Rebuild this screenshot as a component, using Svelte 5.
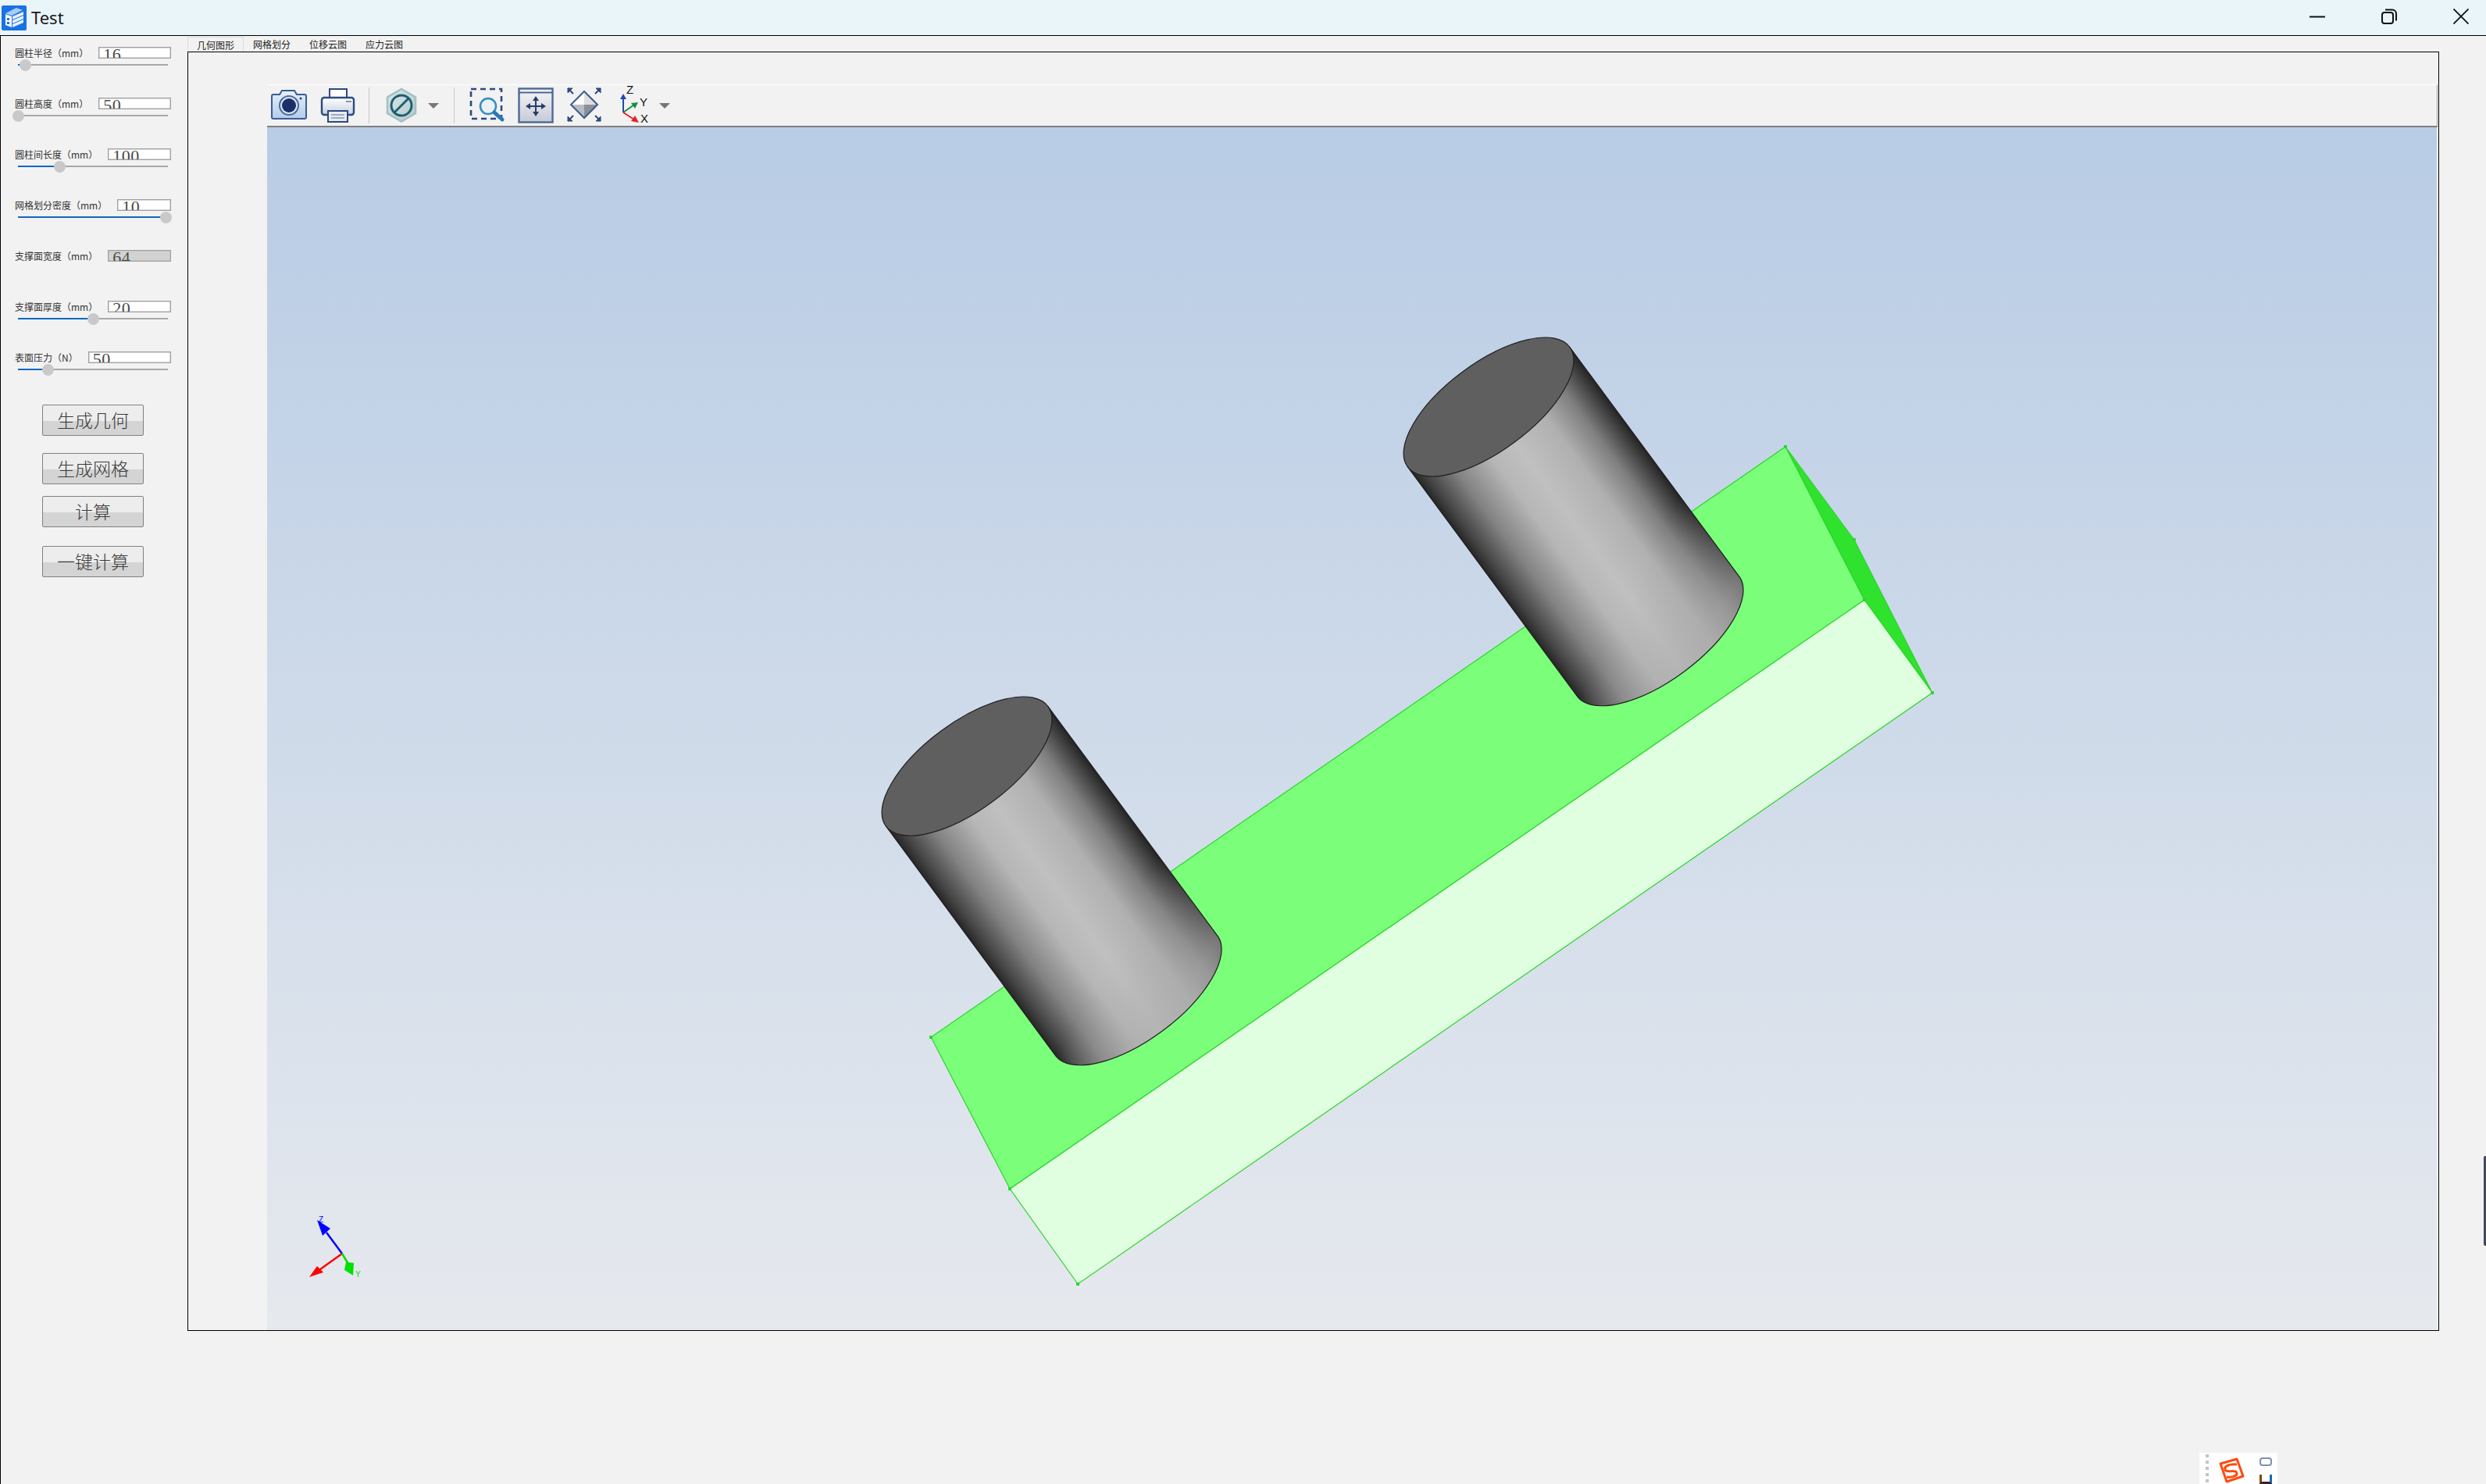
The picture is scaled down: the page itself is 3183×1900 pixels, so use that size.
<script>
  const rows = [
    { label: '圆柱半径（mm）', value: '16', pos: 5.2 },
    { label: '圆柱高度（mm）', value: '50', pos: 0.5 },
    { label: '圆柱间长度（mm）', value: '100', pos: 28 },
    { label: '网格划分密度（mm）', value: '10', pos: 98.5 },
    { label: '支撑面宽度（mm）', value: '64', disabled: true },
    { label: '支撑面厚度（mm）', value: '20', pos: 50.5 },
    { label: '表面压力（N）', value: '50', pos: 20 }
  ];
  const buttons = [
    { text: '生成几何', gap: 3 },
    { text: '生成网格', gap: 22 },
    { text: '计算', gap: 15 },
    { text: '一键计算', gap: 24 }
  ];
  const tabs = ['几何图形', '网格划分', '位移云图', '应力云图'];

  // cylinder geometry, in window pixels
  const a = 129, b = 56, rot = -36.5;
  const u = [0.804, -0.594];
  const d = [218, 295];
  const px = a * u[0], py = a * u[1];
  const cylinders = [{ x: 1238, y: 981, id: 'c1' }, { x: 1906, y: 521, id: 'c2' }].map((c) => {
    const l = [c.x - px, c.y - py], r = [c.x + px, c.y + py];
    const br = [r[0] + d[0], r[1] + d[1]];
    return {
      ...c,
      path: `M${l} L${l[0] + d[0]},${l[1] + d[1]} A${a} ${b} ${rot} 0 0 ${br} L${r} Z`,
      x1: c.x + d[0] / 2 - px, y1: c.y + d[1] / 2 - py,
      x2: c.x + d[0] / 2 + px, y2: c.y + d[1] / 2 + py,
      // the shading fans out toward the lower right corner
      lx1: br[0] - 102, ly1: br[1] - 52, lx2: br[0], ly2: br[1]
    };
  });
  const corners = [[2286, 572], [2374, 691], [2387, 768], [2474, 887], [1192, 1328], [1293, 1522], [1380, 1644]];
</script>

<div class="window">
  <header class="title">
    <svg class="logo" viewBox="0 0 32 32" width="32" height="32">
      <rect width="32" height="32" rx="2" fill="#1a72e4" />
      <path d="M5 10 L19 3 L27 6 L13 13Z" fill="#a9cdf6" />
      <path d="M5 11 L13 14 V28 L5 25Z" fill="#fff" />
      <path d="M14 14 L28 8 V12 L14 18Z M14 19 L28 13 V17 L14 23Z M14 24 L28 18 V22 L14 28Z" fill="#e6f0fc" />
      <rect x="7" y="16" width="3" height="3" fill="#1a72e4" />
      <rect x="7" y="21" width="3" height="3" fill="#1a72e4" />
    </svg>
    <span class="app-name">Test</span>
    <div class="controls">
      <svg width="20" height="20" viewBox="0 0 20 20"><path d="M0 10.5H20" stroke="#111" stroke-width="2" /></svg>
      <svg width="20" height="20" viewBox="0 0 20 20" fill="none" stroke="#111" stroke-width="2"><rect x="1" y="5" width="14" height="14" rx="3" /><path d="M5 1.5h9a5 5 0 0 1 5 5v9" /></svg>
      <svg width="20" height="20" viewBox="0 0 20 20"><path d="M0.5 0.5L19.5 19.5M19.5 0.5L0.5 19.5" stroke="#111" stroke-width="1.8" /></svg>
    </div>
  </header>

  <div class="body">
    <aside class="sidebar">
      {#each rows as row}
        <div class="row">
          <div class="line">
            <span class="label">{row.label}</span>
            <div class="field" class:disabled={row.disabled}>{row.value}</div>
          </div>
          {#if row.pos !== undefined}
            <div class="slider">
              <div class="fill" style="width:{row.pos}%"></div>
              <div class="handle" style="left:{row.pos}%"></div>
            </div>
          {/if}
        </div>
      {/each}
      {#each buttons as btn}
        <button class="btn" style="margin-top:{btn.gap}px">{btn.text}</button>
      {/each}
    </aside>

    <main class="main">
      <div class="tabs">
        {#each tabs as tab, i}
          <div class="tab" class:active={i === 0}>{tab}</div>
        {/each}
      </div>
      <div class="frame">
        <div class="toolbar">
          <div class="group">
            <svg class="icon" viewBox="0 0 46 46">
              <defs>
                <linearGradient id="cam" x1="0" y1="0" x2="0" y2="1"><stop offset="0" stop-color="#e6f0fb" /><stop offset="1" stop-color="#b4cbe8" /></linearGradient>
                <linearGradient id="prn" x1="0" y1="0" x2="0" y2="1"><stop offset="0" stop-color="#fff" /><stop offset="1" stop-color="#c4d0e2" /></linearGradient>
                <linearGradient id="hex" x1="0" y1="0" x2="1" y2="1"><stop offset="0" stop-color="#dbe6e8" /><stop offset="1" stop-color="#b4cace" /></linearGradient>
                <linearGradient id="fit" x1="0" y1="0" x2="0" y2="1"><stop offset="0" stop-color="#f6f6f8" /><stop offset="1" stop-color="#c6cad6" /></linearGradient>
              </defs>
              <path d="M3 9h8l3-5h16l3 5h10a2 2 0 0 1 2 2v27a2 2 0 0 1-2 2H3a2 2 0 0 1-2-2V11a2 2 0 0 1 2-2z" fill="url(#cam)" stroke="#3c5c90" stroke-width="2" />
              <circle cx="23" cy="23" r="12" fill="#dce8f6" stroke="#4a6a9c" stroke-width="2" />
              <circle cx="23" cy="23" r="9" fill="#1c2f68" />
              <circle cx="38" cy="14" r="1.5" fill="#2a4478" />
            </svg>
            <svg class="icon" viewBox="0 0 46 46">
              <rect x="12" y="2" width="22" height="14" fill="#fff" stroke="#2e4a7e" stroke-width="2" />
              <rect x="2" y="13" width="41" height="22" rx="3" fill="url(#prn)" stroke="#2e4a7e" stroke-width="2.4" />
              <rect x="33" y="17" width="7" height="2" fill="#8a94a8" />
              <rect x="10" y="30" width="25" height="14" fill="#e8ecf2" stroke="#2e4a7e" stroke-width="2" />
              <path d="M14 35H31M14 39H31" stroke="#8496b4" stroke-width="1.6" />
            </svg>
          </div>
          <div class="sep"></div>
          <div class="group g2">
            <svg class="icon" viewBox="0 0 46 46">
              <path d="M23 2L41 12.5V33L23 43.5L5 33V12.5Z" fill="url(#hex)" stroke="#a4c0c4" stroke-width="2.6" />
              <circle cx="23" cy="23" r="13" fill="none" stroke="#1e6070" stroke-width="3" />
              <path d="M14 32L32 14" stroke="#1e6070" stroke-width="3" />
            </svg>
            <span class="dd hex-dd"></span>
          </div>
          <div class="sep"></div>
          <div class="group">
            <svg class="icon" viewBox="0 0 46 46">
              <rect x="3" y="2" width="39" height="38" fill="none" stroke="#2e4a7e" stroke-width="2.6" stroke-dasharray="7 5" />
              <circle cx="25" cy="24" r="10" fill="#eaf2f8" stroke="#3a8cc0" stroke-width="2.6" />
              <path d="M33 32L43 41" stroke="#2a78b8" stroke-width="5" stroke-linecap="round" />
            </svg>
            <svg class="icon" viewBox="0 0 46 46">
              <rect x="1.5" y="1.5" width="43" height="43" fill="url(#fit)" stroke="#4e6894" stroke-width="2.4" />
              <path d="M2 6.5H44" stroke="#4e6894" stroke-width="2" />
              <path d="M23 13V35M12 24H34" stroke="#263e6c" stroke-width="2" />
              <path d="M23 11L19 17H27ZM23 37L19 31H27ZM10 24L16 20V28ZM36 24L30 20V28Z" fill="#263e6c" />
            </svg>
            <svg class="icon" viewBox="0 0 46 46">
              <path d="M22 5L5 22H22Z" fill="#fff" /><path d="M22 5L39 22H22Z" fill="#dedede" />
              <path d="M5 22L22 39V22Z" fill="#b8bcc4" /><path d="M39 22L22 39V22Z" fill="#8c9098" />
              <path d="M22 5L39 22L22 39L5 22Z" fill="none" stroke="#3c5c90" stroke-width="2" />
              <path d="M1 1L8 8M43 1L36 8M1 43L8 36M43 43L36 36" stroke="#2e4a7e" stroke-width="2" />
              <path d="M1 1H7L1 7ZM43 1H37L43 7ZM1 43H7L1 37ZM43 43H37L43 37Z" fill="#2e4a7e" stroke="#2e4a7e" />
            </svg>
            <svg class="icon axes" viewBox="0 0 46 46">
              <path d="M9 32V13" stroke="#1e4ab0" stroke-width="2" /><path d="M9 8L5 15H13Z" fill="#1e4ab0" />
              <path d="M9 32L23 22" stroke="#169040" stroke-width="2" /><path d="M28 19L19 20L24 27Z" fill="#169040" />
              <path d="M9 32L23 41" stroke="#e82020" stroke-width="2" /><path d="M29 45L19 43L24 36Z" fill="#e82020" />
              <text x="13" y="8" class="ax">Z</text>
              <text x="30" y="24" class="ax">Y</text>
              <text x="31" y="45" class="ax">X</text>
            </svg>
            <span class="dd ax-dd"></span>
          </div>
        </div>

        <svg class="scene" viewBox="342 163 2778 1540" width="2778" height="1540">
          <defs>
            <linearGradient id="bg" x1="0" y1="0" x2="0" y2="1"><stop offset="0" stop-color="#b8cce5" /><stop offset="1" stop-color="#e6e9ee" /></linearGradient>
            {#each cylinders as c}
              <linearGradient id={c.id} gradientUnits="userSpaceOnUse" x1={c.x1} y1={c.y1} x2={c.x2} y2={c.y2}>
                <stop offset="0" stop-color="#262626" />
                <stop offset="0.05" stop-color="#444" />
                <stop offset="0.18" stop-color="#828282" />
                <stop offset="0.36" stop-color="#b6b6b6" />
                <stop offset="0.5" stop-color="#c0c0c0" />
                <stop offset="0.7" stop-color="#b0b0b0" />
                <stop offset="0.85" stop-color="#7e7e7e" />
                <stop offset="0.96" stop-color="#3c3c3c" />
                <stop offset="1" stop-color="#242424" />
              </linearGradient>
              <linearGradient id="{c.id}-fan" gradientUnits="userSpaceOnUse" x1={c.lx1} y1={c.ly1} x2={c.lx2} y2={c.ly2}>
                <stop offset="0" stop-color="#aaa" stop-opacity="0" />
                <stop offset="1" stop-color="#aaa" stop-opacity="0.6" />
              </linearGradient>
            {/each}
          </defs>
          <rect x="342" y="163" width="2778" height="1540" fill="url(#bg)" />

          <polygon points="2286,572 2374,691 2474,887 2387,768" fill="#2ee22e" stroke="#2fd42f" stroke-width="1.2" />
          <polygon points="1293,1522 2387,768 2474,887 1380,1644" fill="#e0ffe0" stroke="#2fd42f" stroke-width="1.2" />
          <polygon points="1192,1328 2286,572 2387,768 1293,1522" fill="#7bff7b" stroke="#2fd42f" stroke-width="1.2" />
          {#each corners as p}
            <rect x={p[0] - 2} y={p[1] - 2} width="4" height="4" fill="#2fd42f" />
          {/each}

          {#each cylinders as c}
            <path d={c.path} fill="url(#{c.id})" />
            <path d={c.path} fill="url(#{c.id}-fan)" stroke="#1e1e1e" stroke-width="1.2" />
            <ellipse cx={c.x} cy={c.y} rx={a} ry={b} transform="rotate({rot} {c.x} {c.y})" fill="#5f5f5f" stroke="#1e1e1e" stroke-width="1.2" />
          {/each}

          <path d="M438 1605L418 1578" stroke="#0000ff" stroke-width="2.5" />
          <polygon points="406,1562 423,1573 413,1582" fill="#0000ff" />
          <path d="M438 1605L406 1628" stroke="#ff0000" stroke-width="2.5" />
          <polygon points="396,1635 406,1621 414,1629" fill="#ff0000" />
          <path d="M438 1605L447 1620" stroke="#00e000" stroke-width="2.5" />
          <polygon points="441,1626 443,1616 453,1617 452,1633" fill="#00e000" />
          <text x="408" y="1565" class="tri-z">Z</text>
          <text x="455" y="1635" class="tri-y">Y</text>
        </svg>
      </div>
    </main>
  </div>

  <div class="ime">
    <div class="ime-dots"><i></i><i></i><i></i><i></i><i></i></div>
    <svg width="34" height="34" viewBox="0 0 34 34">
      <path d="M3 9L24 3L32 25L11 32Z" fill="#fff" stroke="#ff4a10" stroke-width="3" stroke-linejoin="round" />
      <path d="M24 10C15 9 7 12 9 17C11 21 23 16 24 21C25 25 16 27 11 26" fill="none" stroke="#ff4a10" stroke-width="3" />
    </svg>
    <div class="ime-marks">
      <span class="ring"></span>
      <span class="cup"></span>
    </div>
  </div>
  <div class="edge-bar"></div>
</div>

<style>
  :global(body) { margin: 0; background: #f2f2f2; }

  .window {
    position: relative;
    width: 3183px;
    height: 1900px;
    overflow: hidden;
    background: #f2f2f2;
    font-family: "Noto Sans CJK SC", "Noto Sans", sans-serif;
    color: #222;
  }

  .title {
    display: flex;
    align-items: center;
    height: 45px;
    padding-left: 2px;
    background: #e9f5f9;
    border-bottom: 1px solid #000;
    box-sizing: content-box;
  }
  .app-name {
    margin: 0 0 2px 6px;
    font-family: "Noto Sans", sans-serif;
    font-size: 22px;
    color: #1a1a1a;
  }
  .controls {
    margin: 0 22px 3px auto;
    display: flex;
    gap: 72px;
  }

  .body { display: flex; height: 1854px; }

  .sidebar {
    width: 240px;
    box-sizing: border-box;
    border-left: 1px solid #000;
    padding: 14px 21px 0 18px;
    display: flex;
    flex-direction: column;
  }
  .row { height: 65px; flex: none; }
  .line { display: flex; align-items: center; height: 15px; }
  .label {
    font-size: 12px;
    line-height: 15px;
    white-space: nowrap;
    color: #333;
  }
  .field {
    flex: 1;
    height: 15px;
    margin-left: 13px;
    box-sizing: border-box;
    border: 1px solid #a0a0a0;
    box-shadow: inset 0 0 0 0.5px #b4b4b4;
    background: #fff;
    padding-left: 5px;
    overflow: hidden;
    font-family: "Liberation Serif", serif;
    font-size: 22px;
    line-height: 18px;
    letter-spacing: 0.5px;
    color: #4a4a4a;
  }
  .field.disabled { background: #d2d2d2; }

  .slider {
    position: relative;
    height: 2px;
    margin: 7px 4px 0 4px;
    background: #a8a8a8;
  }
  .fill { height: 100%; background: #1068c0; }
  .handle {
    position: absolute;
    top: -6.5px;
    width: 15px;
    height: 15px;
    margin-left: -7.5px;
    border-radius: 50%;
    background: #c9c9c9;
  }

  .btn {
    flex: none;
    align-self: flex-start;
    width: 130px;
    height: 40px;
    margin-left: 35px;
    padding: 0 0 3px;
    border: 1px solid #808080;
    border-radius: 2px;
    background: linear-gradient(#ededed 0 52%, #d4d4d4 52% 100%);
    font-family: "Noto Sans CJK SC", sans-serif;
    font-size: 23px;
    font-weight: 300;
    line-height: 34px;
    color: #3a3a3a;
  }

  .main { width: 2883px; flex: none; }

  .tabs { display: flex; height: 20px; }
  .tab {
    width: 72px;
    box-sizing: border-box;
    padding-top: 1px;
    font-size: 12px;
    line-height: 20px;
    text-align: center;
    color: #222;
  }
  .tab.active {
    margin-top: 1px;
    padding-top: 0;
    line-height: 19px;
    border: 1px solid #dcdcdc;
    border-bottom: none;
  }

  .frame {
    height: 1638px;
    box-sizing: border-box;
    border: 1px solid #000;
    padding: 41px 1px 0 101px;
  }

  .toolbar {
    display: flex;
    align-items: center;
    height: 55px;
    box-sizing: border-box;
    padding-left: 5px;
    border-top: 1px solid #fff;
    border-right: 1px solid #a0a0a0;
    border-bottom: 2px solid #808080;
  }
  .group { display: flex; align-items: center; gap: 17px; }
  .g2 { margin-right: 3px; }
  .icon { width: 46px; height: 46px; flex: none; overflow: visible; }
  .sep { width: 1px; height: 46px; margin: 0 18px 0 16px; background: #c8c8c8; }
  .dd {
    width: 0;
    height: 0;
    border-left: 7px solid transparent;
    border-right: 7px solid transparent;
    border-top: 7px solid #777;
  }
  .hex-dd { margin-left: -6px; }
  .ax-dd { margin-left: -8px; }
  .ax { font-family: "Liberation Sans", sans-serif; font-size: 15px; fill: #111; }

  .scene { display: block; }
  .tri-z { font-family: "Liberation Sans", sans-serif; font-size: 10px; fill: #0000ff; }
  .tri-y { font-family: "Liberation Sans", sans-serif; font-size: 10px; fill: #00e000; }

  .ime {
    position: absolute;
    left: 2816px;
    top: 1860px;
    width: 100px;
    height: 40px;
    background: #fff;
    display: flex;
    align-items: flex-start;
    overflow: hidden;
  }
  .ime-dots {
    width: 4px;
    margin: 2px 0 0 8px;
    display: flex;
    flex-direction: column;
    gap: 4px;
  }
  .ime-dots i { display: block; width: 4px; height: 4px; background: #c4c4c4; }
  .ime > svg { margin: 5px 0 0 12px; }
  .ime-marks {
    margin: 6px 0 0 19px;
    display: flex;
    flex-direction: column;
    align-items: center;
  }
  .ring {
    width: 12px;
    height: 7px;
    border: 2px solid #8090b0;
    border-radius: 4px;
  }
  .cup {
    width: 16px;
    height: 12px;
    margin-top: 11px;
    border: 3px solid #1a68b8;
    border-top: none;
    border-left-color: #7a4a10;
    border-bottom-color: #3a2030;
    box-sizing: border-box;
  }

  .edge-bar {
    position: absolute;
    right: 0;
    top: 1480px;
    width: 3px;
    height: 115px;
    border-radius: 2px 0 0 2px;
    background: #44485a;
  }
</style>
